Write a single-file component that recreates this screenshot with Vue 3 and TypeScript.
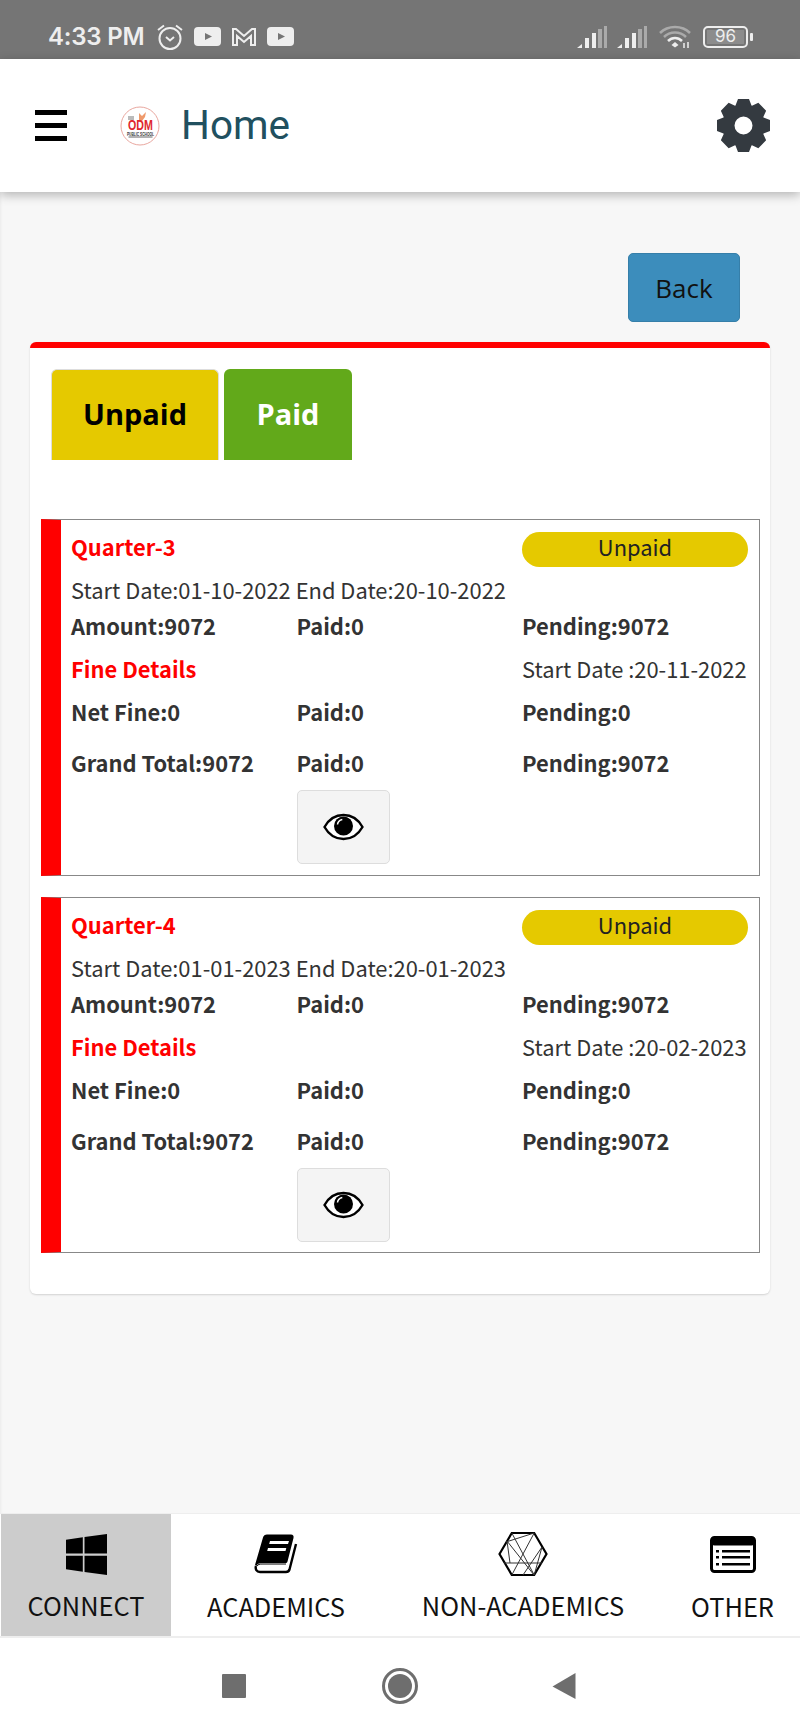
<template>
  <div class="page">
    <div class="status-bar">
      <span class="clock">4:33 PM</span>
      <svg class="st-alarm" width="28" height="28" viewBox="0 0 28 28" fill="none" stroke="#eee" stroke-width="2">
        <circle cx="14" cy="15.500" r="10.500" />
        <path d="M2 7l6-4.500M26 7l-6-4.500M10 14l4 3.500 4-3.500" />
      </svg>
      <svg class="st-icon" width="27" height="19" viewBox="0 0 27 19">
        <rect width="27" height="19" rx="4" fill="#eee" />
        <path d="M11 6l7 3.500-7 3.500z" fill="#757575" />
      </svg>
      <svg class="st-icon" width="26" height="20" viewBox="0 0 26 20" fill="none" stroke="#eee" stroke-width="2">
        <path d="M2 18V2h3l8 7 8-7h3v16h-4V9l-7 6-7-6v9z" />
      </svg>
      <svg class="st-icon" width="27" height="19" viewBox="0 0 27 19">
        <rect width="27" height="19" rx="4" fill="#eee" />
        <path d="M11 6l7 3.500-7 3.500z" fill="#757575" />
      </svg>
      <div class="st-spacer"></div>
      <svg v-for="n in 2" :key="n" class="st-signal" width="30" height="22" viewBox="0 0 30 22">
        <path d="M0 22l5-4v4z" fill="#eee" />
        <rect x="8" y="12" width="4" height="10" fill="#eee" />
        <rect x="15" y="7" width="4" height="15" fill="#eee" />
        <rect x="21" y="3" width="4" height="19" fill="#aaa" />
        <rect x="27" y="0" width="3" height="22" fill="#aaa" />
      </svg>
      <svg class="st-wifi" width="32" height="24" viewBox="0 0 32 24" fill="none">
        <path d="M1 8C9 0 23 0 31 8" stroke="#aaa" stroke-width="2.500" />
        <path d="M5 12c6-6 16-6 22 0" stroke="#aaa" stroke-width="2.500" />
        <path d="M9 16c4-4 10-4 14 0" stroke="#eee" stroke-width="2.500" />
        <path d="M12.500 20l3.500-3 3.500 3-3.500 2.500z" fill="#eee" />
        <path d="M25 18v5M29 23v-6" stroke="#eee" stroke-width="1.500" />
      </svg>
      <div class="battery">
        <div class="battery-body"><span class="battery-fill"></span><span class="battery-num">96</span></div>
        <span class="battery-tip"></span>
      </div>
    </div>

    <header class="app-bar">
      <div class="hamburger"><span></span><span></span><span></span></div>
      <svg class="logo" width="40" height="40" viewBox="0 0 40 40">
        <circle cx="20" cy="20" r="19" fill="#fff" stroke="#e9a79f" stroke-width="1" />
        <path d="M19 7l3 3 4-4-1 5-3 4h-3z" fill="#ef9a6c" />
        <rect x="8" y="10" width="6" height="4" fill="#bbb" />
        <text class="logo-odm" text-anchor="middle" transform="translate(20.500 24) scale(.71 1)">ODM</text>
        <text class="logo-sub" text-anchor="middle" transform="translate(20.500 29.500) scale(.6 1)">PUBLIC SCHOOL</text>
        <rect x="8.500" y="30.500" width="24" height="1" fill="#666" />
      </svg>
      <h1 class="title">Home</h1>
      <svg class="gear" width="53" height="53" viewBox="-26.500 -26.500 53 53">
        <path fill="#343a40" fill-rule="evenodd" :d="gearPath" />
      </svg>
    </header>

    <main class="content">
      <div class="back-row">
        <button class="back-btn">Back</button>
      </div>

      <section class="card">
        <div class="tabs">
          <div class="tab tab-unpaid">Unpaid</div>
          <div class="tab tab-paid">Paid</div>
        </div>

        <div v-for="q in quarters" :key="q.name" class="quarter">
          <div class="q-row q-head">
            <span class="red bold">{{ q.name }}</span>
            <span></span>
            <span class="pill">Unpaid</span>
          </div>
          <div class="q-dates">Start Date:{{ q.start }} End Date:{{ q.end }}</div>
          <div class="q-row q-amount bold">
            <span>Amount:9072</span><span>Paid:0</span><span>Pending:9072</span>
          </div>
          <div class="q-row q-fine">
            <span class="red bold">Fine Details</span>
            <span></span>
            <span class="fine-date">Start Date :{{ q.fine }}</span>
          </div>
          <div class="q-row q-net bold">
            <span>Net Fine:0</span><span>Paid:0</span><span>Pending:0</span>
          </div>
          <div class="q-row q-grand bold">
            <span>Grand Total:9072</span><span>Paid:0</span><span>Pending:9072</span>
          </div>
          <div class="q-row q-action">
            <span></span>
            <button class="eye-btn">
              <svg width="41" height="28" viewBox="0 0 41 28">
                <path d="M1.500 14C6 6 12.500 2 20.500 2S35 6 39.500 14C35 22 28.500 26 20.500 26S6 22 1.500 14z" fill="#fff" stroke="#000" stroke-width="2.400" />
                <circle cx="20.500" cy="13" r="9.500" fill="#000" />
                <path d="M14.500 11.500c.3-2.500 2.200-4.500 4.800-5" fill="none" stroke="#fff" stroke-width="1.500" />
              </svg>
            </button>
          </div>
        </div>
      </section>
    </main>

    <nav class="bottom-nav">
      <div class="nav-item active">
        <div class="nav-icon">
          <svg width="41" height="47" viewBox="0 0 448 512">
            <path d="M0 93.700l183.600-25.300v177.400H0V93.700zm0 324.600l183.600 25.300V268.400H0v149.900zm202.200 28L448 480V268.400H202.200v177.900zm0-380.600v180.100H448V32L202.200 65.700z" />
          </svg>
        </div>
        <span class="nav-label">CONNECT</span>
      </div>
      <div class="nav-item low">
        <div class="nav-icon">
          <svg width="44" height="42" viewBox="0 0 44 42">
            <path d="M13 1.500h24c2 0 3 1.500 2.500 3.500l-6 23.500c-.3 1-1 1.500-2 1.500H8c-3 0-5 1-5.500 3L1 32 9 4.500c.5-2 2-3 4-3z" />
            <path d="M16 8h19l-1 3H15.200zM14 15h18.300l-.8 3H13.200z" fill="#fff" />
            <path d="M2 33c-1 3 .5 6 4 6h26c2 0 3-1 3.500-2.500L42 11" fill="none" stroke="#000" stroke-width="2.400" />
            <path d="M3 33c1-1.500 2.500-2 5-2h24" fill="none" stroke="#000" stroke-width="1" />
          </svg>
        </div>
        <span class="nav-label">ACADEMICS</span>
      </div>
      <div class="nav-item">
        <div class="nav-icon">
          <svg width="50" height="46" viewBox="0 0 50 46" fill="none" stroke="#000">
            <path d="M1.500 23L13.800 2h22.400l12.300 21-12.300 21H13.800z" stroke-width="2.200" />
            <path d="M13.800 2l22.400 42M36.200 2L13.800 44M6 32h38M9 10l3 22M36.200 2L8 11M9 10l27 34M44 16l-7.800 28M44 16L25 44" stroke-width="1" stroke="#333" />
          </svg>
        </div>
        <span class="nav-label">NON-ACADEMICS</span>
      </div>
      <div class="nav-item lowest">
        <div class="nav-icon">
          <svg width="46" height="37" viewBox="0 0 46 37">
            <rect x="1.500" y="1.500" width="43" height="34" rx="3" fill="#fff" stroke="#000" stroke-width="3" />
            <rect x="1.500" y="1.500" width="43" height="8" rx="3" />
            <path d="M12 14h28v2.500H12zM12 20h28v2.500H12zM12 27h28v2.500H12zM6 14h3v2.500H6zM6 20h3v2.500H6zM6 27h3v2.500H6z" />
          </svg>
        </div>
        <span class="nav-label">OTHER</span>
      </div>
    </nav>

    <div class="system-nav">
      <span class="sys-square"></span>
      <span class="sys-circle"><span></span></span>
      <svg width="24" height="28" viewBox="0 0 24 28"><path d="M23.500 1v26L.5 14.500z" fill="#6e6e6e" /></svg>
    </div>
  </div>
</template>

<script setup lang="ts">
interface Quarter {
  name: string;
  start: string;
  end: string;
  fine: string;
}

const quarters: Quarter[] = [
  { name: 'Quarter-3', start: '01-10-2022', end: '20-10-2022', fine: '20-11-2022' },
  { name: 'Quarter-4', start: '01-01-2023', end: '20-01-2023', fine: '20-02-2023' },
];

// 8 tooth cog, the hole goes the other way round via evenodd
const buildGear = (teeth: number, outer: number, root: number, hole: number): string => {
  const step = (Math.PI * 2) / teeth;
  const pts: string[] = [];
  for (let i = 0; i < teeth; i++) {
    const a = i * step - Math.PI / 2;
    const nx = Math.cos(a);
    const ny = Math.sin(a);
    const tx = -ny;
    const ty = nx;
    const corners: [number, number][] = [
      [root, -8],
      [outer, -5.5],
      [outer, 5.5],
      [root, 8],
    ];
    corners.forEach(([r, w]) => {
      pts.push(`${(nx * r + tx * w).toFixed(2)} ${(ny * r + ty * w).toFixed(2)}`);
    });
  }
  return `M${pts.join('L')}Z M${hole} 0A${hole} ${hole} 0 1 0 ${-hole} 0A${hole} ${hole} 0 1 0 ${hole} 0Z`;
};

const gearPath = buildGear(8, 26.5, 20, 9);
</script>

<style>
html,
body {
  margin: 0;
  background: #f7f7f7;
}
</style>

<style scoped>
.page {
  width: 800px;
  height: 1734px;
  display: flex;
  flex-direction: column;
  overflow: hidden;
  font-family: 'Noto Sans CJK SC', 'Noto Sans', sans-serif;
  color: #333;
}
.status-bar {
  height: 59px;
  flex: none;
  background: #757575;
  display: flex;
  align-items: center;
  padding: 14px 47px 0 48px;
  box-sizing: border-box;
}
.clock {
  font-family: Inter, Roboto, sans-serif;
  font-weight: 600;
  font-size: 24px;
  letter-spacing: -0.2px;
  color: #eee;
  margin-right: 12px;
}
.st-icon {
  margin-left: 10px;
}
.st-spacer {
  flex: 1;
}
.st-signal {
  margin-left: 10px;
}
.st-wifi {
  margin-left: 12px;
}
.battery {
  display: flex;
  align-items: center;
  margin-left: 12px;
}
.battery-body {
  width: 45px;
  height: 22px;
  border: 2.500px solid #eee;
  border-radius: 5px;
  box-sizing: border-box;
  position: relative;
  display: flex;
  align-items: center;
  justify-content: center;
}
.battery-fill {
  position: absolute;
  inset: 2px;
  background: #8c8c8c;
}
.battery-num {
  position: relative;
  font-family: Inter, Roboto, sans-serif;
  font-size: 17px;
  color: #eee;
  line-height: 1;
}
.battery-tip {
  width: 3px;
  height: 8px;
  margin-left: 2px;
  background: #eee;
  border-radius: 1px;
}
.app-bar {
  height: 133px;
  flex: none;
  background: #fff;
  display: flex;
  align-items: center;
  padding: 0 30px 0 35px;
  box-sizing: border-box;
  box-shadow: 0 3px 10px rgba(0, 0, 0, 0.28);
  position: relative;
  z-index: 1;
}
.hamburger {
  width: 32px;
  display: flex;
  flex-direction: column;
  gap: 8px;
}
.hamburger span {
  height: 5px;
  background: #000;
}
.logo {
  margin-left: 53px;
}
.logo-odm {
  font-family: 'Liberation Sans', sans-serif;
  font-weight: 700;
  font-size: 15px;
  fill: #e0262e;
}
.logo-sub {
  font-family: 'Liberation Sans', sans-serif;
  font-weight: 700;
  font-size: 5.500px;
  fill: #333;
}
.title {
  margin: 0 0 2px 21px;
  font-family: Roboto, sans-serif;
  font-weight: 400;
  font-size: 40.500px;
  color: #21505f;
  flex: 1;
}
.content {
  flex: 1;
  background: #f7f7f7;
  padding: 61px 30px 0;
  box-shadow: inset 3px 0 3px -2px rgba(0, 0, 0, 0.05);
}
.back-row {
  display: flex;
  justify-content: flex-end;
  padding-right: 30px;
  margin-bottom: 20px;
}
.back-btn {
  width: 112px;
  height: 69px;
  background: #3c8dbc;
  border: 1px solid #367fa9;
  border-radius: 5px;
  font-family: 'Open Sans', sans-serif;
  font-size: 26px;
  color: #111;
  padding: 0;
}
.card {
  background: #fff;
  border-top: 6px solid #f00;
  border-radius: 6px;
  box-shadow: 0 1px 2px rgba(0, 0, 0, 0.15);
  padding: 21px 10px 41px 11px;
  height: 952px;
  box-sizing: border-box;
}
.tabs {
  display: flex;
  gap: 5px;
  padding-left: 10px;
  margin-bottom: 59px;
}
.tab {
  height: 91px;
  display: flex;
  align-items: center;
  justify-content: center;
  border-radius: 6px 6px 0 0;
  padding-bottom: 3px;
  font-family: 'Open Sans', sans-serif;
  font-weight: 700;
  font-size: 29px;
  box-sizing: border-box;
}
.tab-unpaid {
  width: 168px;
  background: #e5c900;
  color: #000;
  border: 1px solid #ddd;
  border-bottom: 0;
}
.tab-paid {
  width: 128px;
  background: #62a91a;
  color: #fff;
}
.quarter {
  height: 356.500px;
  box-sizing: border-box;
  border: 1px solid #888;
  border-left: 20px solid #f00;
  padding: 12px 11px 0 10px;
  font-size: 21.900px;
  line-height: 32px;
  margin-bottom: 21px;
}
.q-row {
  display: grid;
  grid-template-columns: 225.500px 225.500px 1fr;
  align-items: center;
}
.bold {
  font-weight: 700;
}
.red {
  color: #f00;
}
.q-head {
  height: 35px;
  align-items: start;
  line-height: 30px;
}
.pill {
  height: 35px;
  line-height: 30px;
  background: #e5c900;
  border-radius: 18px;
  color: #222;
  text-align: center;
}
.q-dates {
  margin-top: 7px;
  white-space: nowrap;
}
.q-amount {
  margin-top: 4px;
}
.q-fine {
  margin-top: 11px;
}
.q-net {
  margin-top: 11px;
}
.q-grand {
  margin-top: 19px;
}
.q-action {
  margin-top: 11px;
}
.fine-date {
  white-space: nowrap;
}
.eye-btn {
  width: 93px;
  height: 74px;
  background: #f4f4f4;
  border: 1px solid #ddd;
  border-radius: 5px;
  padding: 0;
  display: flex;
  align-items: center;
  justify-content: center;
}
.bottom-nav {
  flex: none;
  height: 125px;
  background: #fff;
  border-top: 1px solid #eee;
  border-bottom: 2px solid #eee;
  box-sizing: border-box;
  display: grid;
  grid-template-columns: 171px 210px 284px 135px;
  color: #111;
}
.nav-item {
  display: flex;
  flex-direction: column;
  align-items: center;
  padding-top: 17px;
  box-sizing: border-box;
}
.nav-item.active {
  background: #ccc;
  margin-left: 1px;
}
.nav-icon {
  height: 46px;
  display: flex;
  align-items: center;
  justify-content: center;
}
.nav-label {
  margin-top: 11px;
  font-size: 25.400px;
  line-height: 34px;
}
.low .nav-label {
  margin-top: 12px;
}
.lowest .nav-label {
  margin-top: 12px;
}
.system-nav {
  flex: none;
  height: 96px;
  background: #fff;
  display: flex;
  align-items: center;
  padding: 0 0 0 222px;
  box-sizing: border-box;
}
.sys-square {
  width: 24px;
  height: 24px;
  background: #6e6e6e;
  border-radius: 1px;
}
.sys-circle {
  width: 36px;
  height: 36px;
  margin-left: 136px;
  margin-right: 134px;
  border: 3px solid #6e6e6e;
  border-radius: 50%;
  box-sizing: border-box;
  display: flex;
  align-items: center;
  justify-content: center;
}
.sys-circle span {
  width: 24px;
  height: 24px;
  background: #6e6e6e;
  border-radius: 50%;
}
</style>
